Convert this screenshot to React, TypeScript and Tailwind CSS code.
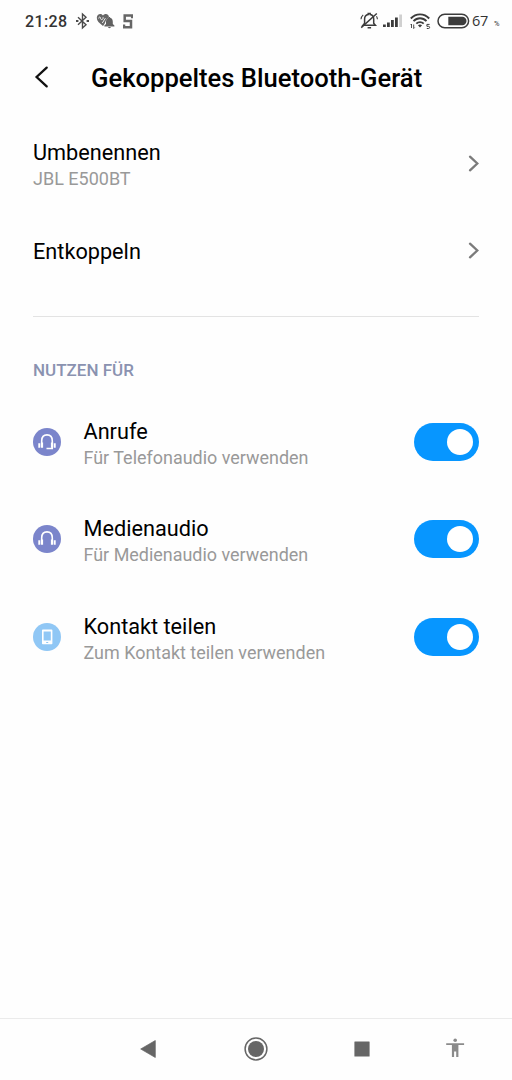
import { useState, type ReactNode } from "react";

function BluetoothIcon() {
  return (
    <svg className="ml-[8px] shrink-0" width="13" height="18" viewBox="0 0 13 18" fill="none" stroke="#4a4a4a" strokeWidth="1.4">
      <path d="M2 5.2 L10 12.8 L6.5 16 V2 L10 5.2 L2 12.8" />
      <path d="M0 9h2.4M10.6 9H13" strokeWidth="1.8" />
    </svg>
  );
}

function HeartBellIcon() {
  return (
    <svg className="ml-[7px] shrink-0" width="19" height="16" viewBox="0 0 19 16">
      <path d="M7 13 C3 10 .8 8 .8 4.8 C.8 2.3 2.5 1 4.3 1 C5.5 1 6.4 1.6 7 2.5 C7.7 1.5 8.7 1 9.8 1 C11.6 1 13 2.3 13 4.4 C9.7 5.4 9.8 9 8 11.8Z" fill="#666" />
      <path d="M2.7 5.5 C2.8 3.8 4.5 3.3 4.5 5.3 C4.6 7.5 7.7 6.8 7.1 4.2 M6.3 10 L9.4 5.2" fill="none" stroke="#eee" strokeWidth="1" />
      <path d="M8.4 12.6 L10 11 V8.7 C10 6.7 11 5.2 12.7 4.8 V4 h1.4 v.8 C15.8 5.2 16.8 6.7 16.8 8.7 V11 L18.4 12.6 V13.4 H8.4Z M12 14.1 h2.8 c-.2 1.6-2.6 1.6-2.8 0Z" fill="#606060" />
    </svg>
  );
}

function BlockSIcon() {
  return (
    <svg className="ml-[8px] shrink-0" width="10" height="15" viewBox="0 0 10 15" fill="none" stroke="#666" strokeWidth="2.5">
      <path d="M9.2 4.2 V1.5 H1.7 V7 H8 V13.2 H1 V10.4" />
    </svg>
  );
}

function StatusBar() {
  return (
    <header className="flex h-[42px] items-center pl-[25px] pr-[11px] text-[#333]">
      <span className="mt-[2px] w-[43px] whitespace-nowrap text-[16px] font-medium leading-none tracking-[0.35px]">21:28</span>
      <BluetoothIcon />
      <HeartBellIcon />
      <BlockSIcon />
      <div className="ml-auto flex items-center">
        <svg width="19" height="18" viewBox="0 0 19 18" fill="none" stroke="#3c3c3c" strokeWidth="1.5">
          <path d="M3 13.2 L4.6 11.2 V7 C4.6 4.5 6.1 3 8.2 2.6 V1.5 h2 v1.1 C12.3 3 13.7 4.5 13.7 7 v4.2 l1.7 2Z" />
          <path d="M7.6 15.8h3.5M1.2 15.6 L16.8 1.5" />
          <path d="M1 7.3 C1.2 5.3 1.9 4 3.2 2.9 M17.4 7.3 C17.3 6 17 5 16.5 4.2" strokeWidth="1.1" />
        </svg>
        <svg className="ml-[4px]" width="20" height="16" viewBox="0 0 20 16">
          <path d="M0 11.5h2.8v2.5H0z M4 9.5h2.8V14H4z M8 7h2.8v7H8z M12 4.5h2.8V14H12z" fill="#3c3c3c" />
          <path d="M16.2 1.5H19V14h-2.8z" fill="#d0d0d0" />
        </svg>
        <svg className="ml-[7px]" width="21" height="18" viewBox="0 0 21 18" fill="none" stroke="#3c3c3c" strokeWidth="1.9">
          <path d="M.8 6.5 C5.9 1 14.1 1 19.2 6.5 M3.5 9.2 C7.2 5.2 12.8 5.2 16.5 9.2 M6.3 11.7 C8.4 9.6 11.6 9.6 13.7 11.7" />
          <path d="M7.9 13.2 Q10 11.7 12.1 13.2 L10 15.6Z" fill="#3c3c3c" stroke="none" />
          <path d="M1.5 12v4 M3.7 12.5v4 M.6 13 l.9-1 M3.7 16.5 l1-1" strokeWidth=".9" />
          <path d="M19.6 12.4h-2.7v1.9h1.7q1.1.1 1 1.2 q-.1 1-1.1 1h-1.7" strokeWidth="1" />
        </svg>
        <svg className="ml-[6px]" width="33" height="16" viewBox="0 0 33 16">
          <rect x="1" y="1.2" width="30.6" height="13.6" rx="6.8" fill="#fff" stroke="#3c3c3c" strokeWidth="1.5" />
          <path d="M11.3 3.8 H25.3 a4.2 4.2 0 0 1 0 8.4 H11.3Z" fill="#3c3c3c" />
        </svg>
        <span className="ml-[2px] w-[20px] font-['Open_Sans',sans-serif] text-[14.5px] leading-none tracking-[-0.3px]">67</span>
        <span className="ml-[2px] mt-[5px] w-[7px] text-[7.5px] leading-none">%</span>
      </div>
    </header>
  );
}

function Chevron() {
  return (
    <svg className="shrink-0" width="11" height="17" viewBox="0 0 11 17" fill="none" stroke="#7b7b7b" strokeWidth="2.3" strokeLinecap="round">
      <path d="M2 1.7 L9.3 8.5 L2 15.3" />
    </svg>
  );
}

function Headphones({ microphone = false }: { microphone?: boolean }) {
  return (
    <svg className="shrink-0" width="28" height="28" viewBox="0 0 28 28">
      <circle cx="14" cy="14" r="14" fill="#7b85cb" />
      <path d="M8.7 19 V12.9 C8.7 9.1 10.7 6.9 14 6.9 S19.3 9.1 19.3 12.9 V19" fill="none" stroke="#fff" strokeWidth="1.6" />
      <path d="M7.9 14.5h2.2v5.2H7.9z M17.9 14.5h2.2v5.2h-2.2z M5.3 15.2h1.9v4.5H5.3z M20.8 15.2h1.9v4.5h-1.9z" fill="#fff" />
      {microphone && <path d="M19.3 19v1.6h-5.8" fill="none" stroke="#fff" strokeWidth="1.5" />}
    </svg>
  );
}

function PhoneIcon() {
  return (
    <svg className="shrink-0" width="28" height="28" viewBox="0 0 28 28">
      <circle cx="14" cy="14" r="14" fill="#90c7f5" />
      <path fillRule="evenodd" d="M9.8 6.5h8.8q.8 0 .8.8v13.1q0 .8-.8.8H9.8q-.8 0-.8-.8V7.3q0-.8.8-.8Z M10.6 8.4v9.2h7.2V8.4Z M13.2 19h2v.9h-2Z" fill="#fff" />
    </svg>
  );
}

function Toggle({ label }: { label: string }) {
  const [on, setOn] = useState(true);
  return (
    <button
      role="switch"
      aria-checked={on}
      aria-label={label}
      onClick={() => setOn(!on)}
      className={`flex h-[38px] w-[65px] shrink-0 items-center rounded-full px-[6px] ${on ? "justify-end bg-[#0796ff]" : "justify-start bg-gray-300"}`}
    >
      <span className="size-[26px] rounded-full bg-white" />
    </button>
  );
}

function UsageRow({ icon, title, detail }: { icon: ReactNode; title: string; detail: string }) {
  return (
    <div className="flex h-[97.6px] items-center">
      {icon}
      <div className="ml-[22.5px] mt-[5px] flex-1 whitespace-nowrap">
        <h3 className="text-[21.7px] leading-[27px]">{title}</h3>
        <p className="text-[17.95px] leading-[26px] text-[#999]">{detail}</p>
      </div>
      <Toggle label={title} />
    </div>
  );
}

export default function App() {
  return (
    <div className="flex h-[1080px] w-[512px] flex-col overflow-hidden bg-[#fefefe] font-[Roboto,sans-serif] text-black">
      <StatusBar />
      <div className="flex h-[70px] items-center pl-[34px]">
        <svg width="16" height="24" viewBox="0 0 16 24" fill="none" stroke="#111" strokeWidth="2.3" strokeLinecap="round">
          <path d="M12.7 2.6 L2.6 12 L12.7 21.4" />
        </svg>
        <h1 className="ml-[41px] mt-[3px] whitespace-nowrap text-[25.6px] font-medium leading-none">Gekoppeltes Bluetooth-Gerät</h1>
      </div>
      <main className="flex-1 pl-[33px] pr-[33px]">
        <div className="flex h-[102px] items-center justify-between">
          <div className="mt-[5px]">
            <h2 className="text-[21.7px] leading-[27px]">Umbenennen</h2>
            <p className="text-[18px] leading-[26px] text-[#999]">JBL E500BT</p>
          </div>
          <Chevron />
        </div>
        <div className="flex h-[73px] items-center justify-between">
          <h2 className="mt-[2px] text-[21.7px] leading-[27px]">Entkoppeln</h2>
          <Chevron />
        </div>
        <div className="mt-[29px] border-t border-[#e3e3e3]" />
        <p className="mt-[43px] text-[17px] font-medium leading-[20px] text-[#8a92b0]">NUTZEN FÜR</p>
        <div className="mt-[13px]">
          <UsageRow icon={<Headphones microphone />} title="Anrufe" detail="Für Telefonaudio verwenden" />
          <UsageRow icon={<Headphones />} title="Medienaudio" detail="Für Medienaudio verwenden" />
          <UsageRow icon={<PhoneIcon />} title="Kontakt teilen" detail="Zum Kontakt teilen verwenden" />
        </div>
      </main>
      <nav className="flex h-[62px] items-center border-t border-[#ebebeb] pb-[1px] pl-[140px] pr-[47px]">
        <svg width="16" height="18" viewBox="0 0 16 18"><path d="M.7 9 L15.3.5v17Z" fill="#666" stroke="#666" strokeWidth=".7" strokeLinejoin="round" /></svg>
        <svg className="ml-[88px]" width="24" height="24" viewBox="0 0 24 24"><circle cx="12" cy="12" r="10.9" fill="none" stroke="#666" strokeWidth="1.5" /><circle cx="12" cy="12" r="8" fill="#666" /></svg>
        <svg className="ml-[86px]" width="16" height="16" viewBox="0 0 16 16"><rect x=".4" y=".4" width="15.2" height="15.2" rx=".5" fill="#666" /></svg>
        <svg className="mb-[2px] ml-auto" width="20" height="20" viewBox="0 0 20 20" fill="#8a8a8a"><circle cx="10.2" cy="2.3" r="1.8" /><path d="M1.2 5.2h17.9v1.9h-5.7v12h-2.2v-5.5H9.1v5.5H6.9v-12H1.2Z" /></svg>
      </nav>
    </div>
  );
}
